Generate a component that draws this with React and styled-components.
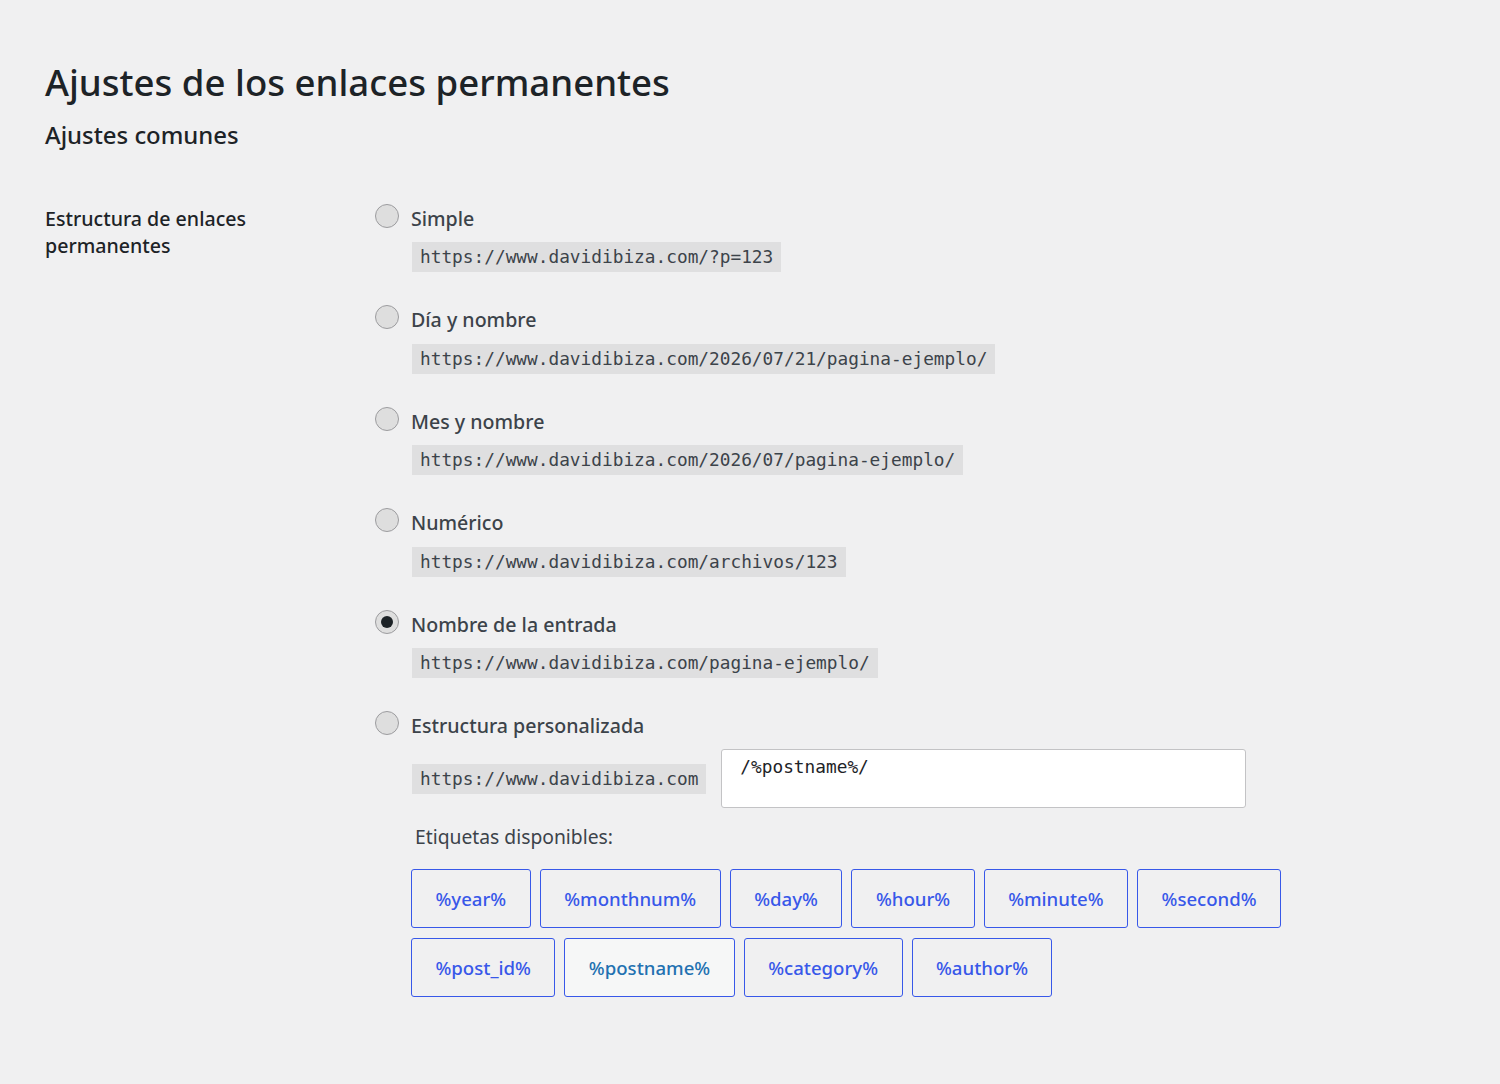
import React from 'react';
import styled, { createGlobalStyle } from 'styled-components';

const GlobalStyle = createGlobalStyle`
	html, body {
		margin: 0;
		padding: 0;
		background: #f0f0f1;
	}
	body {
		font-family: "Noto Sans", "Open Sans", sans-serif;
		color: #1d2327;
	}
`;

const Page = styled.div`
	padding: 52px 45px 60px;
	min-height: 1084px;
	box-sizing: border-box;
`;

const Title = styled.h1`
	margin: 0;
	font-size: 36.6px;
	font-weight: 500;
	line-height: 60px;
	color: #1d2327;
`;

const Subtitle = styled.h2`
	margin: 4px 0 49px;
	font-size: 23.9px;
	font-weight: 500;
	line-height: 38px;
	color: #1d2327;
`;

const FormRow = styled.div`
	display: grid;
	grid-template-columns: 330px 1fr;
`;

const FieldLabel = styled.div`
	font-size: 19.6px;
	font-weight: 500;
	line-height: 27px;
	padding-top: 2px;
	color: #1d2327;
`;

const Options = styled.div`
	display: flex;
	flex-direction: column;
	gap: 32.5px;
`;

const Option = styled.div`
	display: flex;
	flex-direction: column;
	gap: 9px;
`;

const RadioLine = styled.label`
	display: flex;
	align-items: center;
	gap: 12px;
	height: 30px;
	font-size: 19.6px;
	font-weight: 500;
	color: #3c434a;
`;

const Radio = styled.span`
	width: 24px;
	height: 24px;
	border-radius: 50%;
	border: 1.5px solid #9c9c9f;
	background: #dedede;
	box-sizing: border-box;
	display: flex;
	align-items: center;
	justify-content: center;
	margin-top: -5px;

	&::after {
		content: '';
		width: 12px;
		height: 12px;
		border-radius: 50%;
		background: #1d2327;
		display: ${p => (p.$checked ? 'block' : 'none')};
	}
`;

const Code = styled.code`
	display: inline-block;
	align-self: flex-start;
	margin-left: 37px;
	padding: 0 8px;
	height: 30px;
	line-height: 30px;
	background: #dfdfe0;
	font-family: "DejaVu Sans Mono", "Liberation Mono", monospace;
	font-size: 17.8px;
	color: #3c434a;
`;

const CustomRow = styled.div`
	display: flex;
	align-items: center;
	gap: 15px;
	margin-left: 37px;
	margin-top: -1px;

	${Code} {
		margin-left: 0;
		align-self: center;
		margin-top: 1px;
	}
`;

const Input = styled.div`
	width: 525px;
	height: 59px;
	box-sizing: border-box;
	background: #fff;
	border: 1.5px solid #c3c3c5;
	border-radius: 3px;
	padding: 6px 18px;
	font-family: "DejaVu Sans Mono", "Liberation Mono", monospace;
	font-size: 17.8px;
	line-height: 22px;
	color: #1d2327;
`;

const TagsLabel = styled.div`
	margin: 6px 0 0 40px;
	font-size: 19.3px;
	color: #3c434a;
`;

const Tags = styled.div`
	display: flex;
	flex-wrap: wrap;
	gap: 10px 9px;
	margin: 10px 0 0 36px;
	max-width: 880px;
`;

const Tag = styled.button`
	height: 59px;
	padding: 0 23.5px;
	border: 1px solid #3858e9;
	border-radius: 3px;
	background: ${p => (p.$active ? '#f6f7f7' : 'transparent')};
	color: ${p => (p.$active ? '#2271b1' : '#3858e9')};
	font-family: "Noto Sans", "Open Sans", sans-serif;
	font-size: 18.6px;
	font-weight: 500;
	cursor: pointer;
`;

const options = [
	{ label: 'Simple', url: 'https://www.davidibiza.com/?p=123' },
	{ label: 'Día y nombre', url: 'https://www.davidibiza.com/2026/07/21/pagina-ejemplo/' },
	{ label: 'Mes y nombre', url: 'https://www.davidibiza.com/2026/07/pagina-ejemplo/' },
	{ label: 'Numérico', url: 'https://www.davidibiza.com/archivos/123' },
	{ label: 'Nombre de la entrada', url: 'https://www.davidibiza.com/pagina-ejemplo/', checked: true },
];

const tags = ['%year%', '%monthnum%', '%day%', '%hour%', '%minute%', '%second%', '%post_id%', '%postname%', '%category%', '%author%'];

export default function App() {
	return (
		<Page>
			<GlobalStyle />
			<Title>Ajustes de los enlaces permanentes</Title>
			<Subtitle>Ajustes comunes</Subtitle>
			<FormRow>
				<FieldLabel>Estructura de enlaces<br />permanentes</FieldLabel>
				<Options>
					{options.map(o => (
						<Option key={o.label}>
							<RadioLine>
								<Radio $checked={o.checked} />
								{o.label}
							</RadioLine>
							<Code>{o.url}</Code>
						</Option>
					))}
					<Option>
						<RadioLine>
							<Radio />
							Estructura personalizada
						</RadioLine>
						<CustomRow>
							<Code>https://www.davidibiza.com</Code>
							<Input>/%postname%/</Input>
						</CustomRow>
						<TagsLabel>Etiquetas disponibles:</TagsLabel>
						<Tags>
							{tags.map(t => (
								<Tag key={t} $active={t === '%postname%'}>{t}</Tag>
							))}
						</Tags>
					</Option>
				</Options>
			</FormRow>
		</Page>
	);
}
